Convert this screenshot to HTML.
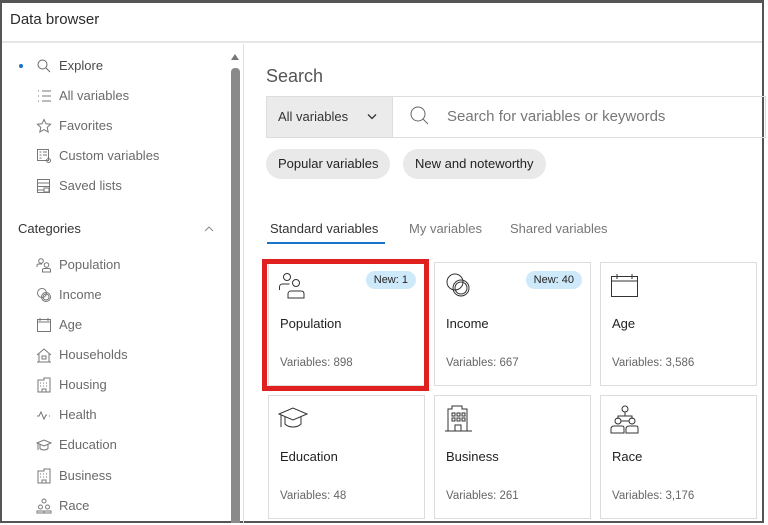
<!DOCTYPE html>
<html><head><meta charset="utf-8"><style>
*{box-sizing:border-box;margin:0;padding:0}
body{width:768px;height:525px;background:#fff;font-family:"Liberation Sans",sans-serif;color:#2b2b2b;position:relative;overflow:hidden}
.frame{position:absolute;left:0;top:0;width:764px;height:523px;border:2px solid #555;border-top-width:3px;background:#fff}
.hdr{position:absolute;left:2px;top:3px;width:760px;height:40px;border-bottom:2px solid #e6e6e6;font-size:15px;padding:8px 8px}
.nav{position:absolute;left:59px;font-size:13px;color:#4a4a4a}
.nav.g{color:#6a6a6a}
.ic{position:absolute;left:36px;width:16px;height:16px}
.sb{position:absolute;left:231px;top:68px;width:9px;height:455px;background:#8a8a8a;border-radius:4px 4px 0 0}
.arrow{position:absolute;left:231px;top:54px;width:0;height:0;border-left:4.5px solid transparent;border-right:4.5px solid transparent;border-bottom:6px solid #777}
.div{position:absolute;left:243px;top:44px;width:1px;height:480px;background:#e0e0e0}
.abs{position:absolute}
.card{position:absolute;width:157px;height:124px;border:1px solid #dcdcdc;background:#fff}
.card .t{position:absolute;left:11px;top:53px;font-size:13px;color:#222}
.card .v{position:absolute;left:11px;top:94px;font-size:11.5px;color:#666}
.card svg{position:absolute;left:9px;top:9px}
.badge{position:absolute;right:8px;top:8px;background:#cde9fa;border-radius:11px;font-size:11px;padding:3px 8px;color:#222}
.chip{position:absolute;top:149px;height:30px;border-radius:15px;background:#e9e9e9;font-size:13px;padding:7px 12px;color:#222}
</style></head><body>
<div class="frame"></div>
<div class="hdr">Data browser</div>
<div class="abs" style="left:19px;top:64px;width:4px;height:4px;border-radius:50%;background:#1a73c8"></div>
<svg class="ic" style="top:58px" viewBox="0 0 16 16" fill="none" stroke="#666" stroke-width="1"><circle cx="6.5" cy="6.5" r="4.5"/><path d="M10 10l4 4"/></svg>
<div class="nav" style="top:58px">Explore</div>
<svg class="ic" style="top:88px" viewBox="0 0 16 16" fill="none" stroke="#777" stroke-width="1"><path d="M2 3h1M2 8h1M2 13h1M6 3h9M6 8h9M6 13h9"/></svg>
<div class="nav g" style="top:88px">All variables</div>
<svg class="ic" style="top:118px" viewBox="0 0 16 16" fill="none" stroke="#777" stroke-width="1"><path d="M8 1.5l2 4.3 4.6.5-3.4 3.1 1 4.6L8 11.6 3.8 14l1-4.6L1.4 6.3 6 5.8z"/></svg>
<div class="nav g" style="top:118px">Favorites</div>
<svg class="ic" style="top:148px" viewBox="0 0 16 16" fill="none" stroke="#777" stroke-width="1"><rect x="1.5" y="1.5" width="11" height="11"/><path d="M3.5 4h2M7 4h4M3.5 7h2M7 7h4M3.5 10h2"/><circle cx="12.5" cy="12.5" r="2"/></svg>
<div class="nav g" style="top:148px">Custom variables</div>
<svg class="ic" style="top:178px" viewBox="0 0 16 16" fill="none" stroke="#777" stroke-width="1"><rect x="1.5" y="1.5" width="12" height="13"/><path d="M1.5 5h12M1.5 8.5h12M1.5 12h6"/><rect x="8" y="10" width="5" height="4"/></svg>
<div class="nav g" style="top:178px">Saved lists</div>
<div class="nav" style="left:18px;top:221px;font-size:13px;color:#333">Categories</div>
<svg class="abs" style="left:204px;top:226px" width="10" height="6" viewBox="0 0 10 6" fill="none" stroke="#888"><path d="M1 5l4-4 4 4"/></svg>
<svg class="ic" style="top:257px" viewBox="0 0 16 16" fill="none" stroke="#777" stroke-width="1"><circle cx="5" cy="4" r="2.3"/><path d="M1 10v-1.5C1 7.5 2 7 3 7h3"/><circle cx="10.5" cy="8" r="2.3"/><path d="M6.5 15v-2c0-1 1-1.5 2-1.5h4c1 0 2 .5 2 1.5v2z"/></svg>
<div class="nav g" style="top:257px">Population</div>
<svg class="ic" style="top:287px" viewBox="0 0 16 16" fill="none" stroke="#777" stroke-width="1"><circle cx="6" cy="6" r="4.5"/><circle cx="10" cy="10" r="4.5"/><circle cx="10" cy="10" r="3"/></svg>
<div class="nav g" style="top:287px">Income</div>
<svg class="ic" style="top:317px" viewBox="0 0 16 16" fill="none" stroke="#777" stroke-width="1"><rect x="1.5" y="2.5" width="13" height="12"/><path d="M1.5 5h13M4 1v3M12 1v3"/></svg>
<div class="nav g" style="top:317px">Age</div>
<svg class="ic" style="top:347px" viewBox="0 0 16 16" fill="none" stroke="#777" stroke-width="1"><path d="M1 8l7-6 7 6M3 7v8h10V7"/><rect x="6" y="9" width="4" height="3"/><path d="M1 15h14"/></svg>
<div class="nav g" style="top:347px">Households</div>
<svg class="ic" style="top:377px" viewBox="0 0 16 16" fill="none" stroke="#777" stroke-width="1"><path d="M2 15V3h6V1h6v14zM6 15v-3h4v3"/><path d="M4 6h1M7 6h1M10 6h1M4 9h1M7 9h1M10 9h1"/></svg>
<div class="nav g" style="top:377px">Housing</div>
<svg class="ic" style="top:407px" viewBox="0 0 16 16" fill="none" stroke="#777" stroke-width="1"><path d="M1 9h2l2-4 3 7 2-4h1M13 9h1"/></svg>
<div class="nav g" style="top:407px">Health</div>
<svg class="ic" style="top:437px" viewBox="0 0 16 16" fill="none" stroke="#777" stroke-width="1"><path d="M1 6l7-3 7 3-7 3zM4 7.5v4c2 2 6 2 8 0v-4M2 6v7"/></svg>
<div class="nav g" style="top:437px">Education</div>
<svg class="ic" style="top:468px" viewBox="0 0 16 16" fill="none" stroke="#777" stroke-width="1"><path d="M2 15V3h6V1h6v14zM6 15v-3h4v3"/><path d="M4 6h1M7 6h1M10 6h1M4 9h1M7 9h1M10 9h1"/></svg>
<div class="nav g" style="top:468px">Business</div>
<svg class="ic" style="top:498px" viewBox="0 0 16 16" fill="none" stroke="#777" stroke-width="1"><circle cx="8" cy="3" r="2"/><circle cx="4.5" cy="9" r="2"/><circle cx="11.5" cy="9" r="2"/><path d="M1 15v-2h7v2zM8 15v-2h7v2z"/></svg>
<div class="nav g" style="top:498px">Race</div>
<div class="arrow"></div><div class="sb"></div><div class="div"></div>

<div class="abs" style="left:266px;top:66px;font-size:18px;color:#555">Search</div>
<div class="abs" style="left:266px;top:96px;width:500px;height:42px;border:1px solid #ddd"></div>
<div class="abs" style="left:267px;top:97px;width:126px;height:40px;background:#ebebeb;border-right:1px solid #ddd;font-size:13px;padding:12px 11px;color:#333">All variables</div>
<svg class="abs" style="left:367px;top:113px" width="10" height="7" viewBox="0 0 10 7" fill="none" stroke="#333" stroke-width="1.3"><path d="M1 1.5l4 4 4-4"/></svg>
<svg class="abs" style="left:408px;top:104px" width="24" height="24" viewBox="0 0 24 24" fill="none" stroke="#666" stroke-width="1"><circle cx="10" cy="10" r="7"/><path d="M15 15l5 5"/></svg>
<div class="abs" style="left:447px;top:108px;font-size:15px;color:#777">Search for variables or keywords</div>
<div class="chip" style="left:266px">Popular variables</div>
<div class="chip" style="left:403px">New and noteworthy</div>
<div class="abs" style="left:270px;top:221px;font-size:13px;color:#333">Standard variables</div>
<div class="abs" style="left:267px;top:242px;width:118px;height:2px;background:#1a73c8"></div>
<div class="abs" style="left:409px;top:221px;font-size:13px;color:#777">My variables</div>
<div class="abs" style="left:510px;top:221px;font-size:13px;color:#777">Shared variables</div>

<div class="card" style="left:268px;top:262px"><svg width="30" height="30" viewBox="0 0 30 30" fill="none" stroke="#333" stroke-width="1"><circle cx="9" cy="5" r="3.5"/><path d="M1.5 18v-3c0-2 1.5-3 3-3h7"/><circle cx="18" cy="11" r="3.5"/><path d="M10 26v-4c0-2 1.5-3 3-3h10c2 0 3 1 3 3v4z"/></svg><span class="badge">New: 1</span><div class="t">Population</div><div class="v">Variables: 898</div></div>
<div class="abs" style="left:262px;top:259px;width:167px;height:132px;border:5px solid #e0201f"></div>
<div class="card" style="left:434px;top:262px"><svg width="30" height="30" viewBox="0 0 30 30" fill="none" stroke="#333" stroke-width="1"><circle cx="11" cy="10" r="8"/><circle cx="17" cy="16" r="8"/><circle cx="17" cy="16" r="6"/></svg><span class="badge">New: 40</span><div class="t">Income</div><div class="v">Variables: 667</div></div>
<div class="card" style="left:600px;top:262px"><svg width="30" height="30" viewBox="0 0 30 30" fill="none" stroke="#333" stroke-width="1"><rect x="1.5" y="4.5" width="26" height="20"/><path d="M1.5 9h26M7 2v5M22 2v5M10 4.5h10"/></svg><div class="t">Age</div><div class="v">Variables: 3,586</div></div>
<div class="card" style="left:268px;top:395px"><svg width="30" height="30" viewBox="0 0 30 30" fill="none" stroke="#333" stroke-width="1"><path d="M1 9l14-6 14 6-14 6zM7 12v7c4 4 12 4 16 0v-7M3 10v12"/></svg><div class="t">Education</div><div class="v">Variables: 48</div></div>
<div class="card" style="left:434px;top:395px"><svg width="30" height="30" viewBox="0 0 30 30" fill="none" stroke="#333" stroke-width="1"><path d="M4 26V4h4V1h10v3h5v22zM1 26h27M11 26v-6h6v6"/><rect x="8" y="8" width="3" height="3"/><rect x="13" y="8" width="3" height="3"/><rect x="18" y="8" width="3" height="3"/><rect x="8" y="13" width="3" height="3"/><rect x="13" y="13" width="3" height="3"/><rect x="18" y="13" width="3" height="3"/></svg><div class="t">Business</div><div class="v">Variables: 261</div></div>
<div class="card" style="left:600px;top:395px"><svg width="30" height="30" viewBox="0 0 30 30" fill="none" stroke="#333" stroke-width="1"><circle cx="15" cy="4" r="3"/><path d="M15 7v4M8 14v-3h14v3"/><circle cx="8" cy="16" r="3"/><circle cx="22" cy="16" r="3"/><path d="M11 16h8M1 28v-4c0-2 1-3 3-3h8c2 0 2 1 2 3v4zM16 28v-4c0-2 1-3 3-3h7c2 0 2 1 2 3v4z"/></svg><div class="t">Race</div><div class="v">Variables: 3,176</div></div>
</body></html>
